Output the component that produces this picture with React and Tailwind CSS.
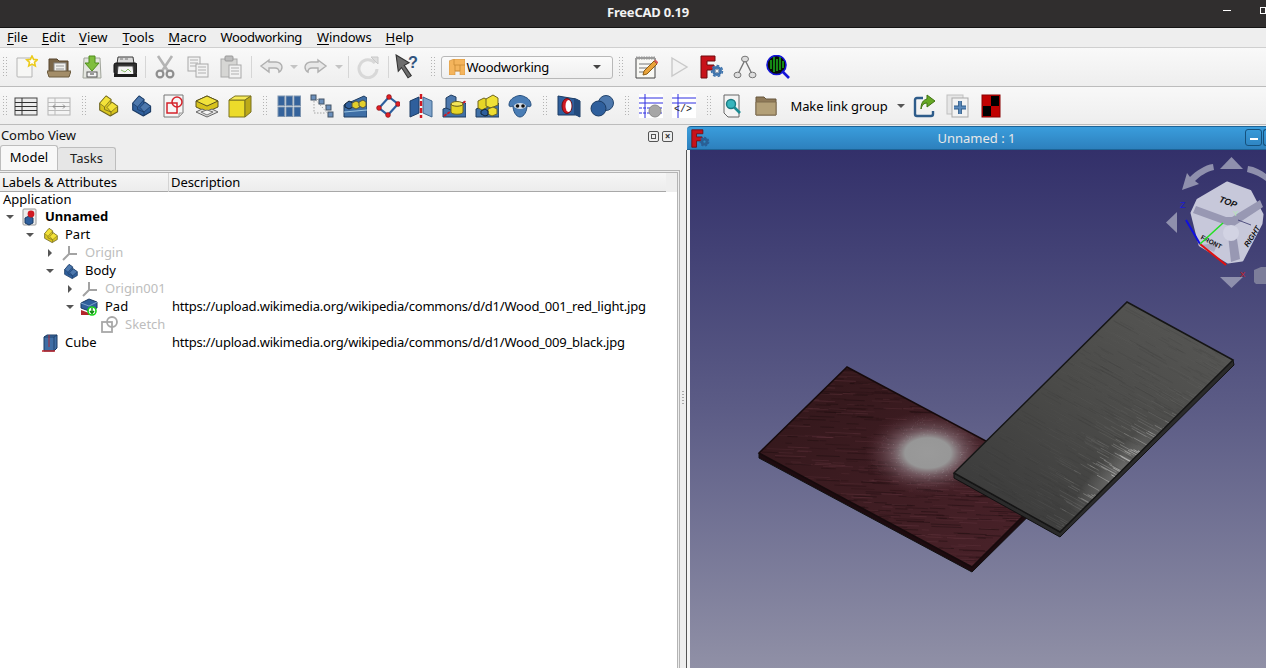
import React from 'react';

const font = { fontFamily: '"Noto Sans", sans-serif' };

// small seeded random so the wood texture is the same on every load
let seed = 17;
const rnd = () => {
    seed = (seed * 16807) % 2147483647;
    return seed / 2147483647;
};

const redStreaks = Array.from({ length: 900 }, () => {
    const x = 755 + rnd() * 310;
    const y = 365 + rnd() * 205;
    const len = 6 + rnd() * 26;
    const light = rnd() > 0.55;
    return {
        x,
        y,
        x2: x + len,
        y2: y + len * 0.04,
        color: light ? '#5f333c' : '#1f0e10',
        op: 0.2 + rnd() * 0.35,
    };
});

// noisy speckle around the light spot on the red plate
const glowDots = Array.from({ length: 500 }, () => {
    const a = rnd() * Math.PI * 2;
    const r = 0.55 + rnd() * 0.75;
    return {
        x: 928 + Math.cos(a) * r * 50,
        y: 453 + Math.sin(a) * r * 33,
        op: Math.max(0, 0.45 - (r - 0.55) * 0.6) * rnd(),
    };
});

const blackStreaks = Array.from({ length: 620 }, () => {
    const u = rnd();
    const v = rnd();
    const x = 1060 + u * 173 - v * 106;
    const y = 532 - u * 172 - v * 59;
    const edge = Math.pow(1 - v, 5);
    const bump = Math.exp(-Math.pow((u - 0.38) / 0.26, 2));
    const len = 6 + rnd() * 20;
    const bright = rnd() > 0.4;
    return {
        x,
        y,
        x2: x + len,
        y2: y + len * 0.55,
        op: bright ? 0.02 + edge * bump * 0.9 : 0.12,
        color: bright ? '#c8c8c6' : '#2e2e2e',
    };
});

function Icon({ children, size = 24, className = '' }) {
    return (
        <svg width={size} height={size} viewBox="0 0 24 24" className={className}>
            {children}
        </svg>
    );
}

function Stair({ top, side, dark, size = 24 }) {
    return (
        <Icon size={size}>
            <path d="M3.700 9.300L10 2l5 3.500v4l1-1.200 5.600 4v5.400L14.300 22 3.700 16z" fill={side} stroke={dark} strokeWidth="1.100" strokeLinejoin="round" />
            <path d="M3.700 9.300L10 2l5 3.500L8.500 13zM11 13.300l5-5 5.600 4L15 18z" fill={top} stroke={dark} strokeWidth="0.7" />
            <path d="M8.500 13v2.500l6.500 2.500v4" fill="none" stroke={dark} strokeWidth="0.8" />
        </Icon>
    );
}

const Doc = ({ x, y, w, h }) => (
    <g>
        <rect x={x} y={y} width={w} height={h} fill="#f2f2f2" stroke="#a8a8a8" />
        <path d={`M${x + 2} ${y + 3}h${w - 4}M${x + 2} ${y + 6}h${w - 4}M${x + 2} ${y + 9}h${w - 4}`} stroke="#b0b0b0" />
    </g>
);

const NewIcon = () => (
    <Icon>
        <path d="M3 3h15v19H4a1 1 0 0 1-1-1z" fill="#f7f7f5" stroke="#b5b5b5" />
        <path d="M18 1l1.6 3.4 3.6.4-2.7 2.5.8 3.7-3.3-1.9-3.3 1.9.8-3.7-2.7-2.5 3.6-.4z" fill="#fff" stroke="#eccb1c" strokeWidth="1.6" />
    </Icon>
);
const OpenIcon = () => (
    <Icon>
        <path d="M2 4h8l2 2h9v15H2z" fill="#7a6649" stroke="#57452e" />
        <rect x="7" y="8" width="12" height="9" fill="#f0f0ee" stroke="#888" />
        <path d="M9 11h8M9 14h8" stroke="#999" />
        <path d="M0 16h24l-2 6H2z" fill="#a38d68" stroke="#6b5a3e" />
    </Icon>
);
const SaveIcon = () => (
    <Icon>
        <path d="M4 3h16l1 20H3z" fill="#e4e6e0" stroke="#a0a49a" />
        <path d="M9 1h6v7h4l-7 8-7-8h4z" fill="#7fbe3d" stroke="#4f8c1c" />
        <rect x="7" y="17" width="10" height="5" fill="#f4f4f4" stroke="#555" />
        <rect x="10" y="18" width="4" height="2" fill="#999" />
    </Icon>
);
const PrintIcon = () => (
    <Icon>
        <path d="M5 2h15l1 7H4z" fill="#d9d9d9" stroke="#3a3a3a" />
        <path d="M7 4h3M12 4h3" stroke="#777" />
        <rect x="1" y="8" width="23" height="11" rx="2" fill="#2f2f2f" stroke="#111" />
        <path d="M5 11h15l1 10H4z" fill="#f4f4f4" stroke="#444" />
        <path d="M8 15l4 2 3-3 3 3" stroke="#8bbd6a" fill="none" />
        <rect x="1" y="19" width="23" height="3" fill="#1d1d1d" />
    </Icon>
);
const CutIcon = () => (
    <Icon>
        <g fill="none" stroke="#b4b4b4" strokeWidth="2.6">
            <path d="M5 1l10 15M19 1L9 16" />
        </g>
        <circle cx="7" cy="19" r="3.4" fill="none" stroke="#8f8f8f" strokeWidth="2.2" />
        <circle cx="17" cy="19" r="3.4" fill="none" stroke="#8f8f8f" strokeWidth="2.2" />
    </Icon>
);
const CopyIcon = () => (
    <Icon>
        <Doc x={2} y={2} w={12} h={14} />
        <Doc x={10} y={9} w={12} h={13} />
    </Icon>
);
const PasteIcon = () => (
    <Icon>
        <rect x="2" y="4" width="16" height="18" fill="#d6d6d4" stroke="#aaa" />
        <rect x="6" y="1" width="8" height="5" rx="1" fill="#bdbdbd" stroke="#999" />
        <Doc x={10} y={10} w={12} h={13} />
    </Icon>
);
const UndoIcon = () => (
    <Icon>
        <path d="M10 5L2 11l8 6v-4h6c3 0 4 2 4 4 2-1 3-3 3-5 0-3-3-5-6-5h-7z" fill="#e8e8e8" stroke="#b0b0b0" strokeWidth="1.4" />
    </Icon>
);
const RedoIcon = () => (
    <Icon>
        <path d="M14 5l8 6-8 6v-4H8c-3 0-4 2-4 4-2-1-3-3-3-5 0-3 3-5 6-5h7z" fill="#e8e8e8" stroke="#b0b0b0" strokeWidth="1.4" />
    </Icon>
);
const RefreshIcon = () => (
    <Icon>
        <path d="M19 8a9 9 0 1 0 2 6" fill="none" stroke="#d8d8d8" strokeWidth="3" />
        <path d="M15 2h7v7z" fill="#dedede" stroke="#c8c8c8" />
    </Icon>
);
const HelpIcon = () => (
    <Icon size={26}>
        <path d="M1 1l12 7-4.500 2.500L15 20l-3 2-6-9.500L3 16z" fill="#6d6d6d" stroke="#333" />
        <text x="12" y="13" fontSize="15" fontWeight="700" fontFamily="Liberation Sans" fill="#31557f">?</text>
    </Icon>
);
const TableIcon = ({ dim }) => (
    <Icon>
        <rect x="1" y="4" width="22" height="17" fill={dim ? '#f4f4f4' : '#ececec'} stroke={dim ? '#b4b4b4' : '#444'} />
        <path d="M1 8.500h22M1 12.500h22M1 16.500h22M8 4v17" stroke={dim ? '#bbb' : '#333'} />
        {dim && <path d="M6 12.500h12M6 12.500l2-2M6 12.500l2 2M18 12.500l-2-2M18 12.500l-2 2" stroke="#8e8e8e" fill="none" />}
    </Icon>
);
const SketchIcon = () => (
    <Icon>
        <path d="M2 1h19v18l-4 4H2z" fill="#f6f6f6" stroke="#777" />
        <path d="M21 19h-4v4z" fill="#ddd" stroke="#999" />
        <rect x="5" y="9" width="10" height="10" fill="none" stroke="#d4222a" strokeWidth="1.500" />
        <circle cx="15" cy="8" r="5" fill="none" stroke="#d4222a" strokeWidth="1.500" />
    </Icon>
);
const LayerIcon = () => (
    <Icon>
        <path d="M1 7l11-5 11 5v6l-11 5-11-5z" fill="#d7c21c" stroke="#5b5320" />
        <path d="M1 7l11 5 11-5-11-5z" fill="#f1e23c" stroke="#5b5320" />
        <path d="M1 18l6-3 5 2 5-2 6 3-11 5z" fill="#e2e2e2" stroke="#666" />
        <path d="M6 18l6-2 6 2-6 3z" fill="#f4f4f4" stroke="#777" />
    </Icon>
);
const BoxIcon = () => (
    <Icon>
        <path d="M1 6h16v17H1z" fill="#ecdb2a" stroke="#7a7220" />
        <path d="M1 6l6-4h16l-6 4z" fill="#f6ea58" stroke="#7a7220" />
        <path d="M17 6l6-4v16l-6 5z" fill="#bca918" stroke="#7a7220" />
    </Icon>
);
const GridIcon = () => (
    <Icon>
        {[1, 9, 17].map((x) =>
            [2, 13].map((y) => <rect key={x + '-' + y} x={x} y={y} width="6.500" height="9.500" fill="#35639c" stroke="#7f95b0" />)
        )}
    </Icon>
);
const TreeIcon = () => (
    <Icon>
        <path d="M4 4l15 17M4 4l7 3M4 4v15h12M11 7l7 7" stroke="#a5a5a5" strokeDasharray="1.500 1.500" fill="none" />
        <rect x="1" y="1" width="5" height="5" fill="#6b8fbb" stroke="#456" />
        <rect x="9" y="5" width="5" height="5" fill="#6b8fbb" stroke="#456" />
        <rect x="16" y="11" width="5" height="5" fill="#6b8fbb" stroke="#456" />
        <rect x="18" y="18" width="5" height="5" fill="#6b8fbb" stroke="#456" />
    </Icon>
);
const RampIcon = () => (
    <Icon>
        <path d="M1 11L21 2l3 2v19H1z" fill="#3f6fa6" stroke="#1f3c60" />
        <path d="M1 18l23-2" stroke="#9cc4e0" />
        <path d="M2 10l4-3 4 2v4l-4 2-4-2z" fill="#2f5f9c" stroke="#123" />
        <path d="M9 9l4-2 4 2v4l-4 2-4-2z" fill="#e3cf2b" stroke="#554" />
        <path d="M16 8l4-2 3 2v4l-3 2-4-2z" fill="#e3cf2b" stroke="#554" />
    </Icon>
);
const DiamondIcon = () => (
    <Icon>
        <path d="M13 3l9 7-10 11-9-7z" fill="none" stroke="#2d5f9e" strokeWidth="2.200" />
        {[[13, 3], [22, 10], [12, 21], [3, 14]].map(([x, y]) => (
            <circle key={x} cx={x} cy={y} r="2.400" fill="#e01f26" stroke="#7a0f12" strokeWidth="0.6" />
        ))}
    </Icon>
);
const MirrorIcon = () => (
    <Icon>
        <path d="M10 3L1 7v16l9-4z" fill="#2f5f9c" stroke="#1a3a63" />
        <path d="M14 3l9 4v16l-9-4z" fill="#7ea3cb" stroke="#3f668f" />
        <path d="M12 0v24" stroke="#d01922" strokeWidth="2.400" strokeDasharray="5 2" />
    </Icon>
);
const BlockIcon = ({ yellow }) => (
    <Icon>
        <path d="M1 15l21-7 2 2v13H1z" fill="#3f6fa6" stroke="#1f3c60" />
        {yellow ? (
            <>
                <path d="M3 7l6-3 4 2v7l-6 3-4-2z" fill="#e6d526" stroke="#6e6520" />
                <path d="M11 5l7-4 5 3v7l-7 3-5-2z" fill="#f0e136" stroke="#6e6520" />
                <path d="M13 15l5-2 4 2v5l-5 2-4-2z" fill="#eedd30" stroke="#6e6520" />
                <path d="M6 17l4-2 3 2v4l-3 1-4-2z" fill="#2f5f9c" stroke="#123" />
            </>
        ) : (
            <>
                <path d="M4 4l5-3 5 2v10l-5 3-5-2z" fill="#4d78ad" stroke="#1f3c60" />
                <ellipse cx="15" cy="10" rx="6" ry="2.500" fill="#f4e65a" stroke="#6e6520" />
                <path d="M9 10v8c0 3 12 3 12 0v-8c0 3-12 3-12 0z" fill="#e6d526" stroke="#6e6520" />
                <path d="M2 22l6-4M21 9l3-2" stroke="#d01922" strokeWidth="1.800" strokeDasharray="3 1" />
            </>
        )}
    </Icon>
);
const SheepIcon = () => (
    <Icon>
        <path d="M7 3c3-2 7-2 10 0 3 1 6 4 6 8 0 2-2 2-4 1 0 5-3 11-7 11S5 17 5 12c-2 1-4 1-4-1 0-4 3-7 6-8z" fill="#4a7db5" stroke="#27507f" />
        <ellipse cx="12" cy="12" rx="6" ry="3" fill="#d4dce4" />
        <circle cx="9.500" cy="12" r="1.800" fill="#111" />
        <circle cx="15" cy="12" r="1.800" fill="#111" />
    </Icon>
);
const HoleIcon = () => (
    <Icon>
        <path d="M1 2l18 3 4 2v16l-4-2-18 0z" fill="#2f5f9c" stroke="#1a3a63" />
        <path d="M17 4l6 3v16l-6-3z" fill="#234a7c" />
        <ellipse cx="10" cy="12" rx="5" ry="7.500" fill="#d01922" stroke="#6e0f14" />
        <ellipse cx="11.500" cy="12" rx="3" ry="6" fill="#fff" />
    </Icon>
);
const SpheresIcon = () => (
    <Icon>
        <circle cx="16" cy="9" r="7.500" fill="#4d78ad" stroke="#24466f" />
        <circle cx="8.500" cy="14.500" r="7.500" fill="#2f5f9c" stroke="#1a3a63" />
    </Icon>
);
const LinesIcon = ({ code }) => (
    <Icon>
        <rect width="24" height="24" fill="#fff" />
        <path d="M0 4h24M0 9h24" stroke="#2f2fe0" />
        <path d="M6 0v24" stroke="#2f2fe0" />
        {code ? (
            <text x="2" y="18" fontSize="10" fontFamily="Liberation Mono" fill="#222">&lt;/&gt;</text>
        ) : (
            <>
                <path d="M0 14h24M0 19h24" stroke="#2f2fe0" strokeDasharray="3 1" />
                <circle cx="16" cy="17" r="6" fill="#a6a6a6" stroke="#8a8a8a" />
            </>
        )}
    </Icon>
);
const FindIcon = () => (
    <Icon>
        <path d="M3 1h15v22H7l-4-4z" fill="#f4f4f4" stroke="#666" />
        <circle cx="10" cy="10" r="4.500" fill="#38b5bd" stroke="#1c7b83" strokeWidth="1.400" />
        <path d="M13 13l6 6" stroke="#1c8b93" strokeWidth="2.600" />
    </Icon>
);
const FolderIcon = () => (
    <Icon>
        <path d="M2 3h8l2 2h10v16H2z" fill="#8f7a59" stroke="#67573e" />
        <path d="M2 8h20v13H2z" fill="#b3a078" stroke="#7e6c4f" />
    </Icon>
);
const ShareIcon = () => (
    <Icon>
        <path d="M10 4H4Q2 4 2 6v14q0 2 2 2h14q2 0 2-2v-3" fill="none" stroke="#2e5c8a" strokeWidth="2.400" />
        <path d="M14 1l8 6-8 6V9c-3 0-5 2-6 6 0-6 2-9 6-10z" fill="#66a825" stroke="#3e7210" />
    </Icon>
);
const AddDocIcon = () => (
    <Icon>
        <rect x="1" y="1" width="16" height="19" fill="#e6e6e6" stroke="#c0c0c0" />
        <rect x="6" y="4" width="16" height="19" fill="#f2f2f2" stroke="#a9a9a9" />
        <path d="M14 7v13M8 13.500h12" stroke="#2e5c8a" strokeWidth="3.800" />
        <path d="M14 7v13M8 13.500h12" stroke="#5c8abb" strokeWidth="1.800" />
    </Icon>
);
const CheckerIcon = () => (
    <Icon>
        <rect x="3" y="1" width="18" height="22" fill="#c00000" stroke="#8a0000" />
        <rect x="12" y="2" width="8" height="10" fill="#000" />
        <rect x="4" y="12" width="8" height="10" fill="#000" />
    </Icon>
);
const MacroIcon = () => (
    <Icon>
        <path d="M2 3h19v20H2z" fill="#f8f8f4" stroke="#444" />
        <path d="M2 3h19" stroke="#999" strokeWidth="3" strokeDasharray="1.500 1" />
        <path d="M5 9h12M5 13h9M5 17h7" stroke="#777" />
        <path d="M9 20l1-4L20 6l3 3-10 10z" fill="#e9a33a" stroke="#8a5c16" />
        <path d="M20 6l1.500-1.500 3 3L23 9z" fill="#d85a5a" />
    </Icon>
);
const PlayIcon = () => (
    <Icon>
        <path d="M5 3l15 9-15 9z" fill="#f2f2f2" stroke="#c9c9c9" strokeWidth="1.400" />
    </Icon>
);
const GearShape = ({ cx, cy, r, fill, stroke }) => (
    <g>
        <circle cx={cx} cy={cy} r={r} fill="none" stroke={fill} strokeWidth={r * 0.75} />
        <circle cx={cx} cy={cy} r={r + r * 0.52} fill="none" stroke={fill} strokeWidth={r * 0.42} strokeDasharray={`${r * 0.75} ${r * 0.62}`} />
        <circle cx={cx} cy={cy} r={r * 0.5} fill="none" stroke={stroke} strokeWidth="0.5" />
    </g>
);
const FreeCadIcon = ({ size = 24, gear = '#3f74ad' }) => (
    <Icon size={size}>
        <path d="M1 1h14v5H7v4h7v5H7v8H1z" fill="#c8121a" stroke="#6e0a0e" />
        <GearShape cx={17} cy={16} r={3.600} fill={gear} stroke="#1f3c60" />
    </Icon>
);
const NodesIcon = () => (
    <Icon>
        <path d="M12 5L5 19M12 5l7 14" stroke="#777" strokeWidth="1.400" />
        <ellipse cx="12" cy="4" rx="3.500" ry="2.800" fill="#ddd" stroke="#777" />
        <ellipse cx="4.500" cy="20" rx="3.500" ry="2.800" fill="#ddd" stroke="#777" />
        <ellipse cx="19.500" cy="20" rx="3.500" ry="2.800" fill="#ddd" stroke="#777" />
    </Icon>
);
const ScopeIcon = () => (
    <Icon>
        <circle cx="10.500" cy="10" r="9.500" fill="#050f05" stroke="#1414d8" strokeWidth="1.600" />
        <path d="M5 5v9M8 2v15M11 4v12M14 2v13M17 6v7" stroke="#1fc81f" strokeWidth="1.300" />
        <path d="M16 16l7 7" stroke="#1414d8" strokeWidth="2.600" />
    </Icon>
);
const WoodIcon = () => (
    <svg width="16" height="16" viewBox="0 0 16 16">
        <path d="M0 2l5-2h11v16H11v-4H6v4H0z" fill="#f4b45c" stroke="#d2913c" strokeWidth="0.6" />
        <path d="M5 0v6h11M6 6v6h5V6" fill="none" stroke="#c98a36" strokeWidth="0.8" />
    </svg>
);
const AxesIcon = () => (
    <svg width="16" height="16" viewBox="0 0 16 16">
        <path d="M7 9V1M7 9h8M7 9l-6 6" stroke="#a3a3a3" strokeWidth="2" fill="none" />
    </svg>
);
const DocCube = () => (
    <svg width="16" height="18" viewBox="0 0 16 18">
        <rect x="1" y="1" width="13" height="16" rx="1" fill="#ececec" stroke="#999" />
        <path d="M3 10l4-2 4 2v5l-4 2-4-2z" fill="#2f5f9c" stroke="#1a3a63" />
        <circle cx="9" cy="6" r="3.400" fill="#d01922" />
    </svg>
);
const PadIcon = () => (
    <svg width="20" height="18" viewBox="0 0 20 18">
        <path d="M1 5l8-4 8 3v6l-8 3-8-3z" fill="#2f5f9c" stroke="#1a3a63" />
        <path d="M1 5l8 3 8-4" fill="none" stroke="#7ea3cb" />
        <path d="M1 12l8 3v2H1z" fill="#b3262c" />
        <circle cx="12" cy="13" r="4" fill="#fff" stroke="#16d316" strokeWidth="1.600" />
        <path d="M12 10v5M10 13l2 2.400 2-2.400" stroke="#0a8a0a" strokeWidth="1.400" fill="none" />
    </svg>
);
const SketchTreeIcon = () => (
    <svg width="18" height="18" viewBox="0 0 18 18">
        <rect x="1" y="6" width="10" height="10" fill="none" stroke="#a8a8a8" strokeWidth="1.800" />
        <circle cx="11" cy="6" r="5" fill="none" stroke="#a8a8a8" strokeWidth="1.800" />
    </svg>
);
const CubeTreeIcon = () => (
    <svg width="18" height="18" viewBox="0 0 18 18">
        <path d="M3 3l3-2h10v13l-3 3H3z" fill="#3f6ea5" stroke="#1a3a63" />
        <path d="M3 3h10v14M13 3l3-2" fill="none" stroke="#1a3a63" strokeWidth="0.8" />
        <path d="M8 1v12" stroke="#c0242a" strokeWidth="0.9" />
        <path d="M1 17h13" stroke="#c0242a" strokeWidth="1.500" />
    </svg>
);

function Grip({ width }) {
    return (
        <div className="flex h-full shrink-0 items-center justify-center" style={{ width }}>
            <div className="h-[22px] w-[6px] bg-[radial-gradient(circle,#b4b4b4_0.8px,transparent_1px)] bg-[length:3px_3px]" />
        </div>
    );
}

function Sep() {
    return (
        <div className="flex h-full w-[7px] shrink-0 items-center justify-center">
            <div className="h-[22px] w-px bg-[#d6d6d6]" />
        </div>
    );
}

function Slot({ children, w = 'w-[33px]' }) {
    return <div className={`flex h-full shrink-0 items-center justify-center ${w}`}>{children}</div>;
}

function Caret({ color = '#c4c4c4' }) {
    return <div className="h-0 w-0 border-x-[4px] border-t-[4px] border-x-transparent" style={{ borderTopColor: color }} />;
}

function Toolbars() {
    return (
        <>
            <div className="flex h-[39px] items-center border-b border-[#bcbcbc] bg-gradient-to-b from-[#f9f9f9] to-[#eeeeee]">
                <Grip width={9.5} />
                <Slot><NewIcon /></Slot>
                <Slot><OpenIcon /></Slot>
                <Slot><SaveIcon /></Slot>
                <Slot><PrintIcon /></Slot>
                <Sep />
                <Slot><CutIcon /></Slot>
                <Slot><CopyIcon /></Slot>
                <Slot><PasteIcon /></Slot>
                <Sep />
                <Slot><UndoIcon /></Slot>
                <Slot w="w-[12px]"><Caret /></Slot>
                <Slot><RedoIcon /></Slot>
                <Slot w="w-[12px]"><Caret /></Slot>
                <Sep />
                <Slot><RefreshIcon /></Slot>
                <Sep />
                <Slot><HelpIcon /></Slot>
                <Grip width={16} />
                <div className="flex h-[23px] w-[172px] shrink-0 items-center rounded-[3px] border border-[#b8b8b8] bg-gradient-to-b from-[#fbfbfb] to-[#efefef] pl-[7px] pr-[11px] text-[13px] tracking-[-0.25px] text-black">
                    <WoodIcon />
                    <span className="ml-[2px] flex-1 pt-px">Woodworking</span>
                    <Caret color="#444" />
                </div>
                <Grip width={17} />
                <Slot><MacroIcon /></Slot>
                <Slot><PlayIcon /></Slot>
                <Slot><FreeCadIcon /></Slot>
                <Slot><NodesIcon /></Slot>
                <Slot><ScopeIcon /></Slot>
            </div>
            <div className="flex h-[38px] items-center border-b border-[#bcbcbc] bg-gradient-to-b from-[#f8f8f8] to-[#eeeeee]">
                <Grip width={9.5} />
                <Slot><TableIcon /></Slot>
                <Slot><TableIcon dim /></Slot>
                <Grip width={16} />
                <Slot><Stair top="#f3e23a" side="#d9c51e" dark="#6e6520" /></Slot>
                <Slot><Stair top="#4d78ad" side="#2f5f9c" dark="#1a3a63" /></Slot>
                <Slot><SketchIcon /></Slot>
                <Slot><LayerIcon /></Slot>
                <Slot><BoxIcon /></Slot>
                <Grip width={16} />
                <Slot><GridIcon /></Slot>
                <Slot><TreeIcon /></Slot>
                <Slot><RampIcon /></Slot>
                <Slot><DiamondIcon /></Slot>
                <Slot><MirrorIcon /></Slot>
                <Slot><BlockIcon /></Slot>
                <Slot><BlockIcon yellow /></Slot>
                <Slot><SheepIcon /></Slot>
                <Grip width={16} />
                <Slot><HoleIcon /></Slot>
                <Slot><SpheresIcon /></Slot>
                <Grip width={16} />
                <Slot><LinesIcon /></Slot>
                <Slot><LinesIcon code /></Slot>
                <Grip width={16} />
                <Slot><FindIcon /></Slot>
                <Slot><FolderIcon /></Slot>
                <span className="ml-[8px] w-[96px] shrink-0 whitespace-nowrap pt-[2px] text-[13px] tracking-[-0.12px] text-black">Make link group</span>
                <Slot w="w-[22px] pl-[6px]"><Caret color="#555" /></Slot>
                <Slot><ShareIcon /></Slot>
                <Slot><AddDocIcon /></Slot>
                <Slot><CheckerIcon /></Slot>
            </div>
        </>
    );
}

const rows = [
    { label: 'Unnamed', depth: 0, arrow: 'down', icon: <DocCube />, bold: true },
    { label: 'Part', depth: 1, arrow: 'down', icon: <Stair size={17} top="#f3e23a" side="#d9c51e" dark="#6e6520" /> },
    { label: 'Origin', depth: 2, arrow: 'right', icon: <AxesIcon />, dim: true },
    { label: 'Body', depth: 2, arrow: 'down', icon: <Stair size={17} top="#4d78ad" side="#2f5f9c" dark="#1a3a63" /> },
    { label: 'Origin001', depth: 3, arrow: 'right', icon: <AxesIcon />, dim: true },
    {
        label: 'Pad',
        depth: 3,
        arrow: 'down',
        icon: <PadIcon />,
        desc: 'https://upload.wikimedia.org/wikipedia/commons/d/d1/Wood_001_red_light.jpg',
    },
    { label: 'Sketch', depth: 4, icon: <SketchTreeIcon />, dim: true },
    {
        label: 'Cube',
        depth: 1,
        icon: <CubeTreeIcon />,
        desc: 'https://upload.wikimedia.org/wikipedia/commons/d/d1/Wood_009_black.jpg',
    },
];

const depthPad = ['pl-[5px]', 'pl-[25px]', 'pl-[45px]', 'pl-[65px]', 'pl-[85px]'];

function TreeRow({ row }) {
    return (
        <div className="flex h-[18px] items-center text-[13px]">
            <div className={`flex w-[171px] shrink-0 items-center ${depthPad[row.depth]}`}>
                <div className="flex w-[10px] shrink-0 justify-center">
                    {row.arrow === 'down' && <div className="h-0 w-0 border-x-[4px] border-t-[4px] border-x-transparent border-t-[#555]" />}
                    {row.arrow === 'right' && <div className="h-0 w-0 border-y-[4px] border-l-[4px] border-y-transparent border-l-[#555]" />}
                </div>
                <div className="ml-[5px] flex w-[20px] shrink-0 justify-center">{row.icon}</div>
                <span className={`ml-[5px] whitespace-nowrap ${row.bold ? 'font-bold text-black' : row.dim ? 'text-[#bdbdbd]' : 'text-black'}`}>
                    {row.label}
                </span>
            </div>
            {row.desc && <span className="ml-[1px] whitespace-nowrap tracking-[-0.21px] text-black">{row.desc}</span>}
        </div>
    );
}

function ComboView() {
    return (
        <div className="flex w-[680px] shrink-0 flex-col bg-[#eeeeee]">
            <div className="flex h-[20px] items-center justify-between pl-px pr-[7px] text-[13px] tracking-[-0.1px] text-[#111]">
                <span>Combo View</span>
                <div className="flex gap-[3px]">
                    <div className="flex h-[11px] w-[11px] items-center justify-center rounded-[2px] border border-[#555]">
                        <div className="h-[5px] w-[5px] border border-[#555]" />
                    </div>
                    <div className="flex h-[11px] w-[11px] items-center justify-center rounded-[2px] border border-[#555] text-[10px] font-bold leading-none text-[#333]">×</div>
                </div>
            </div>
            <div className="flex h-[24px] items-end text-[13px]">
                <div className="flex h-[25px] w-[58px] items-center justify-center rounded-t-[3px] border border-b-0 border-[#bdbdbd] bg-[#f8f8f8] text-black">Model</div>
                <div className="flex h-[23px] w-[58px] items-center justify-center rounded-t-[3px] border border-l-0 border-b-0 border-[#bdbdbd] bg-[#e6e6e6] text-[#222]">Tasks</div>
            </div>
            {/* double frame: tab pane outside, tree widget inside */}
            <div className="flex min-h-0 flex-1 flex-col border-t border-r border-[#b4b4b4] pr-px pt-px">
                <div className="flex min-h-0 flex-1 flex-col border-t border-r border-[#b4b4b4] bg-white">
                    <div className="flex h-[19px] shrink-0 bg-[#eeeeee]">
                        <div className="flex w-[666px] shrink-0 items-center border-b border-[#a8a8a8] bg-gradient-to-b from-[#f6f6f6] to-[#ececec] pt-px text-[13px] tracking-[-0.06px] text-black">
                            <span className="w-[169px] shrink-0 border-r border-[#d4d4d4] pl-[2px]">Labels &amp; Attributes</span>
                            <span className="pl-[2px]">Description</span>
                        </div>
                    </div>
                    <div className="flex h-[16px] shrink-0 items-center pl-[3px] text-[13px] text-black">Application</div>
                    {rows.map((row) => (
                        <TreeRow key={row.label} row={row} />
                    ))}
                </div>
            </div>
        </div>
    );
}

function NaviCube() {
    return (
        <g>
            <g fill="#8f90ad">
                <path d="M1220 169h23l-11.500-12z" />
                <path d="M1177 212v21l-11-10.500z" />
                <path d="M1220 277h23l-11.500 11z" />
                <path d="M1213 164l1 6c-8 2-14 6-19 11l4 3-17 6 5-17 3 4c6-6 15-12 23-13z" />
                <path d="M1248 166c7 1 13 4 18 8v7c-5-4-11-7-19-9z" />
            </g>
            <path d="M1227 183l23 8.500 12 23-1 9-19 36.500-14 2-28-17-8-32 6-13z" fill="#c7c8da" stroke="#c7c8da" strokeWidth="3" strokeLinejoin="round" />
            {/* three dark bevels meeting in the near corner */}
            <path d="M1196 206l-3 7 36 13 5 0 29-19-3-7-28 17-6 0z" fill="#9898b3" />
            <path d="M1227 226l8 0 5 33-9 3z" fill="#9898b3" />
            <path d="M1200 245l14 7 4-9z" fill="#8d8ea9" opacity="0.5" />
            <circle cx="1231" cy="233" r="8" fill="#d2d3e3" />
            <path d="M1238 220l13 5" stroke="#34346a" strokeWidth="0.8" />
            <text x="1219" y="205" fontSize="9" fontWeight="700" fontStyle="italic" fontFamily="Liberation Sans" fill="#111" transform="rotate(20 1228 202)">TOP</text>
            <text x="1201" y="240" fontSize="6.500" fontWeight="700" fontFamily="Liberation Sans" fill="#111" transform="rotate(27 1203 238)">FRONT</text>
            <text x="1245" y="246" fontSize="7.500" fontWeight="700" fontStyle="italic" fontFamily="Liberation Sans" fill="#111" transform="rotate(-58 1248 244)">RIGHT</text>
            <path d="M1200 244l-14-24" stroke="#1010e0" strokeWidth="2" />
            <path d="M1200 244l26 21" stroke="#e01010" strokeWidth="2" />
            <path d="M1200 244l23-21" stroke="#22e022" strokeWidth="1.500" />
            <text x="1180" y="208" fontSize="9" fontFamily="Liberation Sans" fill="#1a1ad0">Z</text>
            <text x="1240" y="277" fontSize="8" fontFamily="Liberation Sans" fill="#d01a1a">X</text>
            <text x="1233" y="216" fontSize="8" fontFamily="Liberation Sans" fill="#b0e8b0">Y</text>
            <path d="M1254 270l7-3h5v17h-10l-2-2z" fill="#7d7e9a" />
        </g>
    );
}

function Viewport() {
    return (
        <svg viewBox="690 150 576 518" className="block h-full w-full">
            <defs>
                <clipPath id="redTop">
                    <path d="M847 367L1059 480 972 567 759 453z" />
                </clipPath>
                <clipPath id="blackTop">
                    <path d="M1127 302L1233 360 1060 532 954 473z" />
                </clipPath>
                <linearGradient id="redBase" x1="0" y1="0" x2="1" y2="1">
                    <stop offset="0" stopColor="#301619" />
                    <stop offset="1" stopColor="#4c232b" />
                </linearGradient>
                <linearGradient id="blackBase" x1="1" y1="0" x2="0" y2="1">
                    <stop offset="0" stopColor="#585856" />
                    <stop offset="0.5" stopColor="#4a4a48" />
                    <stop offset="1" stopColor="#383838" />
                </linearGradient>
                <radialGradient id="glow">
                    <stop offset="0" stopColor="#9a9a9a" />
                    <stop offset="0.36" stopColor="#979797" />
                    <stop offset="0.55" stopColor="#8f7a82" stopOpacity="0.6" />
                    <stop offset="1" stopColor="#5a2f3a" stopOpacity="0" />
                </radialGradient>
                <radialGradient id="edgeGlow">
                    <stop offset="0" stopColor="#a8a8a8" stopOpacity="0.38" />
                    <stop offset="1" stopColor="#a8a8a8" stopOpacity="0" />
                </radialGradient>
            </defs>

            {/* red plate */}
            <path d="M759 453L759 458 972 572 1060 485 1059 480 972 567z" fill="#1d0b0f" stroke="#111" strokeWidth="1" />
            <path d="M847 367L1059 480 972 567 759 453z" fill="url(#redBase)" />
            <g clipPath="url(#redTop)">
                {redStreaks.map((s, i) => (
                    <path key={i} d={`M${s.x} ${s.y}L${s.x2} ${s.y2}`} stroke={s.color} strokeOpacity={s.op} />
                ))}
                <ellipse cx="928" cy="453" rx="64" ry="42" fill="url(#glow)" />
                {glowDots.map((d, i) => (
                    <rect key={i} x={d.x} y={d.y} width="1" height="1" fill="#a89aa0" fillOpacity={d.op} />
                ))}
            </g>
            <path d="M847 367L1059 480 972 567 759 453z" fill="none" stroke="#160a0c" strokeWidth="1.500" />

            {/* black plate */}
            <path d="M954 473L954 478 1060 537 1234 365 1233 360 1060 532z" fill="#2b2b2b" stroke="#111" strokeWidth="1" />
            <path d="M1127 302L1233 360 1060 532 954 473z" fill="url(#blackBase)" />
            <g clipPath="url(#blackTop)">
                <ellipse cx="1120" cy="472" rx="70" ry="20" fill="url(#edgeGlow)" transform="rotate(-45 1120 472)" />
                {blackStreaks.map((s, i) => (
                    <path key={i} d={`M${s.x} ${s.y}L${s.x2} ${s.y2}`} stroke={s.color} strokeOpacity={s.op} />
                ))}
            </g>
            <path d="M1127 302L1233 360 1060 532 954 473z" fill="none" stroke="#151515" strokeWidth="1.500" />

            <NaviCube />
        </svg>
    );
}

function MdiWindow() {
    return (
        <div className="flex min-w-0 flex-1 flex-col">
            <div className="relative ml-px flex h-[24px] shrink-0 items-center justify-center rounded-tl-[4px] border-y border-[#1d6396] bg-gradient-to-b from-[#3a9ddc] to-[#2d80bd] pt-px text-[13px] text-[#e8e8e8]">
                <div className="absolute left-[4px] top-[2px]">
                    <FreeCadIcon size={19} gear="#2a5f95" />
                </div>
                <span>Unnamed : 1</span>
                <div className="absolute right-[4px] top-[2px] flex h-[17px] w-[17px] items-center justify-center rounded-[3px] border border-[#15517d]">
                    <div className="mt-[3px] h-[2px] w-[8px] bg-white" />
                </div>
                <div className="absolute right-0 top-[2px] h-[17px] w-[3px] rounded-l-[3px] border-y border-l border-[#15517d]" />
            </div>
            <div className="flex min-h-0 flex-1">
                <div className="w-px shrink-0 bg-[#555555]" />
                <div className="w-[3px] shrink-0 bg-[#f4f4f4]" />
                <div className="min-w-0 flex-1 bg-gradient-to-b from-[#33306a] via-[#5c5c86] to-[#9090a6]">
                    <Viewport />
                </div>
            </div>
        </div>
    );
}

function App() {
    const menus = [
        ['F', 'ile', ''],
        ['E', 'dit', ''],
        ['V', 'iew', ''],
        ['T', 'ools', 'ml-px'],
        ['M', 'acro', ''],
        ['', 'Woodworking', 'tracking-[-0.35px]'],
        ['W', 'indows', 'ml-px tracking-[-0.15px]'],
        ['H', 'elp', ''],
    ];

    return (
        <div className="flex h-[668px] w-full flex-col overflow-hidden bg-[#eeeeee]" style={font}>
            <div className="relative flex h-[28px] shrink-0 items-center justify-center border-b border-[#141414] bg-[#302e2e] text-[13px] font-bold text-[#f2f2f2]">
                <span className="-mt-[2px] ml-[30px] tracking-[-0.2px]">FreeCAD 0.19</span>
                <div className="absolute right-[35px] top-[10px] h-px w-[8px] bg-white" />
                <div className="absolute right-0 top-[7px] h-[7px] w-[6px] border border-white" />
            </div>
            <div className="flex h-[20px] shrink-0 items-center gap-[14px] border-b border-[#cfcfcf] pl-[7px] text-[13px] text-black">
                {menus.map(([first, rest, track]) => (
                    <span key={first + rest} className={track}>
                        {first && <span className="underline underline-offset-2">{first}</span>}
                        {rest}
                    </span>
                ))}
            </div>
            <Toolbars />
            <div className="flex min-h-0 flex-1 pt-px">
                <ComboView />
                <div className="flex w-[6px] shrink-0 items-center justify-center bg-[#eeeeee]">
                    <div className="h-[14px] w-[2px] bg-[radial-gradient(circle,#aaa_0.8px,transparent_1px)] bg-[length:2px_3px]" />
                </div>
                <MdiWindow />
            </div>
        </div>
    );
}

export default App;
